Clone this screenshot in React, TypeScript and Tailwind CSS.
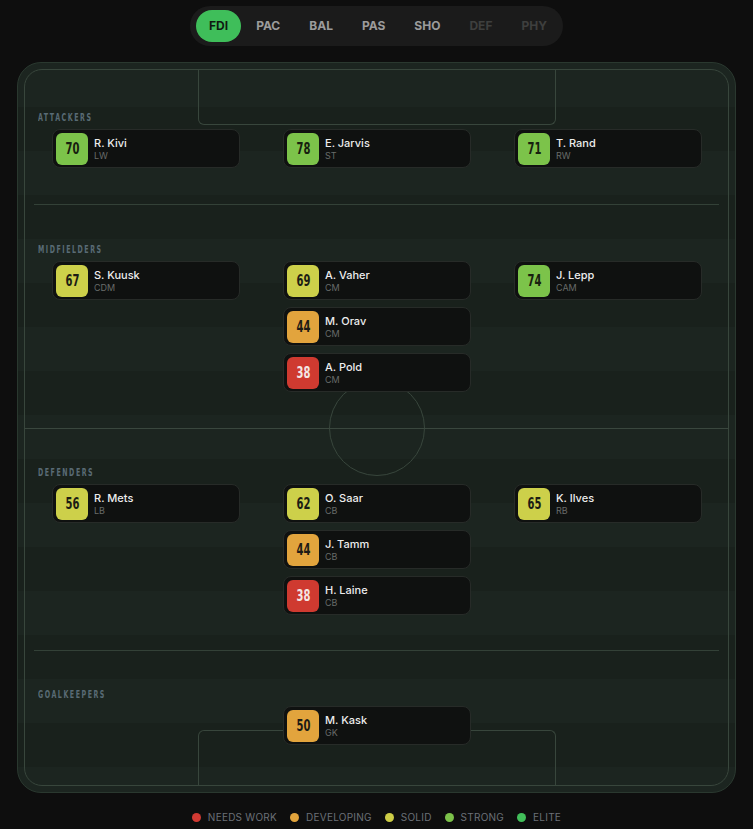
import React from "react";

type Player = { rating: number; name: string; pos: string };

const tabs = [
  { id: "FDI", dim: false },
  { id: "PAC", dim: false },
  { id: "BAL", dim: false },
  { id: "PAS", dim: false },
  { id: "SHO", dim: false },
  { id: "DEF", dim: true },
  { id: "PHY", dim: true },
];

const lines: { title: string; cols: Player[][] }[] = [
  {
    title: "Attackers",
    cols: [
      [{ rating: 70, name: "R. Kivi", pos: "LW" }],
      [{ rating: 78, name: "E. Jarvis", pos: "ST" }],
      [{ rating: 71, name: "T. Rand", pos: "RW" }],
    ],
  },
  {
    title: "Midfielders",
    cols: [
      [{ rating: 67, name: "S. Kuusk", pos: "CDM" }],
      [
        { rating: 69, name: "A. Vaher", pos: "CM" },
        { rating: 44, name: "M. Orav", pos: "CM" },
        { rating: 38, name: "A. Pold", pos: "CM" },
      ],
      [{ rating: 74, name: "J. Lepp", pos: "CAM" }],
    ],
  },
  {
    title: "Defenders",
    cols: [
      [{ rating: 56, name: "R. Mets", pos: "LB" }],
      [
        { rating: 62, name: "O. Saar", pos: "CB" },
        { rating: 44, name: "J. Tamm", pos: "CB" },
        { rating: 38, name: "H. Laine", pos: "CB" },
      ],
      [{ rating: 65, name: "K. Ilves", pos: "RB" }],
    ],
  },
  {
    title: "Goalkeepers",
    cols: [[], [{ rating: 50, name: "M. Kask", pos: "GK" }], []],
  },
];

const legend = [
  { label: "Needs work", dot: "bg-[#d13a33]" },
  { label: "Developing", dot: "bg-[#e1a33c]" },
  { label: "Solid", dot: "bg-[#cdcd46]" },
  { label: "Strong", dot: "bg-[#7cc24a]" },
  { label: "Elite", dot: "bg-[#42bf5a]" },
];

function badgeClass(r: number) {
  if (r < 40) return "bg-[#cf3a30] text-[#f3e6e4]";
  if (r < 55) return "bg-[#e2a43d] text-[#1c1a16]";
  if (r < 70) return "bg-[#cdd04a] text-[#1c1d14]";
  return "bg-[#7cc34a] text-[#17200f]";
}

// condensed display face, squeezed a little since no narrow font is installed
const condensed = "font-['Liberation_Sans_Narrow','DejaVu_Sans_Condensed',sans-serif]";

function PlayerCard({ p }: { p: Player }) {
  return (
    <div className="flex items-center gap-1.5 h-[39px] w-[188px] p-[3px] rounded-lg bg-[#0f1110] border border-[#272b28]">
      <div className={`w-8 h-8 rounded-md flex items-center justify-center ${badgeClass(p.rating)}`}>
        <span className={`inline-block text-[15px] leading-4 font-bold scale-x-[0.74] ${condensed}`}>{p.rating}</span>
      </div>
      <div className="flex flex-col font-['Inter',sans-serif]">
        <span className="text-[11px] leading-[13px] font-medium text-[#ededed]">{p.name}</span>
        <span className="text-[9px] leading-[11px] text-[#686b69]">{p.pos}</span>
      </div>
    </div>
  );
}

function Section({ title, cols, className }: { title: string; cols: Player[][]; className?: string }) {
  return (
    <div className={className}>
      <div className="pl-1 h-3 leading-3">
        <span
          className={`inline-block origin-left scale-x-[0.7] text-[10px] leading-3 font-bold uppercase tracking-[0.22em] text-[#596b75] ${condensed}`}
        >
          {title}
        </span>
      </div>
      <div className="mt-2 pl-[18px] grid grid-cols-[188px_188px_188px] gap-x-[43px]">
        {cols.map((col, i) => (
          <div key={i} className="flex flex-col gap-[7px]">
            {col.map((p) => (
              <PlayerCard key={p.name} p={p} />
            ))}
          </div>
        ))}
      </div>
    </div>
  );
}

export default function App() {
  return (
    <div className="min-h-screen bg-[#0e0e0e] pt-1.5 pb-4 font-['Inter',sans-serif]">
      <div className="flex justify-center">
        <div className="inline-flex items-center gap-px pl-[6px] pr-[2px] py-1 rounded-full bg-[#1b1b1b]">
          {tabs.map((t, i) => (
            <button
              key={t.id}
              className={`h-8 rounded-full text-[12px] font-bold ${
                i === 0
                  ? "bg-[#3fbe5a] text-[#0f1a12] px-[13px]"
                  : t.dim
                  ? "text-[#3e3f3e] px-[14px]"
                  : "text-[#9b9b9b] px-[14px]"
              }`}
            >
              {t.id}
            </button>
          ))}
        </div>
      </div>

      <div className="relative mx-auto mt-4 w-[719px] rounded-[24px] border border-[#2a382f] bg-[#1a221d] bg-[image:repeating-linear-gradient(180deg,#1c2520_0px,#1c2520_44px,#19211c_44px,#19211c_88px)] overflow-hidden">
        {/* pitch markings */}
        <div className="absolute inset-[6px] rounded-[18px] border border-[#38463c]" />
        <div className="absolute left-1/2 -translate-x-1/2 top-[6px] w-[358px] h-[56px] border-x border-b border-[#38463c] rounded-b-[6px]" />
        <div className="absolute left-1/2 -translate-x-1/2 bottom-[6px] w-[358px] h-[56px] border-x border-t border-[#38463c] rounded-t-[6px]" />
        <div className="absolute left-1/2 top-1/2 -translate-x-1/2 -translate-y-1/2 w-24 h-24 rounded-full border border-[#38463c]" />

        <div className="relative px-4 pt-[46px] pb-[47px]">
          <Section title={lines[0].title} cols={lines[0].cols} />
          <div className="mt-9 h-px bg-[#334137]" />
          <Section title={lines[1].title} cols={lines[1].cols} className="mt-9" />
          <div className="mt-9 -mx-[10px] h-px bg-[#3a473e]" />
          <Section title={lines[2].title} cols={lines[2].cols} className="mt-[35px]" />
          <div className="mt-[35px] h-px bg-[#334137]" />
          <Section title={lines[3].title} cols={lines[3].cols} className="mt-[35px]" />
        </div>
      </div>

      <div className="mt-[18px] flex justify-center items-center gap-[13px]">
        {legend.map((l) => (
          <div key={l.label} className="flex items-center gap-[7px]">
            <span className={`w-[9px] h-[9px] rounded-full ${l.dot}`} />
            <span className="text-[10px] leading-3 uppercase tracking-wide text-[#6b7077]">{l.label}</span>
          </div>
        ))}
      </div>
    </div>
  );
}
